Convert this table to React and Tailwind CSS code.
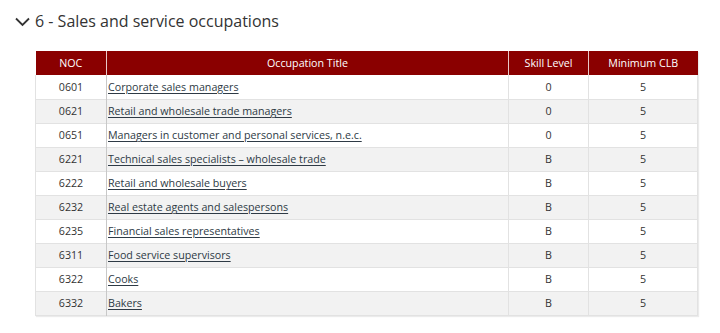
import React from "react";

const rows = [
  ["0601", "Corporate sales managers", "0", "5"],
  ["0621", "Retail and wholesale trade managers", "0", "5"],
  ["0651", "Managers in customer and personal services, n.e.c.", "0", "5"],
  ["6221", "Technical sales specialists – wholesale trade", "B", "5"],
  ["6222", "Retail and wholesale buyers", "B", "5"],
  ["6232", "Real estate agents and salespersons", "B", "5"],
  ["6235", "Financial sales representatives", "B", "5"],
  ["6311", "Food service supervisors", "B", "5"],
  ["6322", "Cooks", "B", "5"],
  ["6332", "Bakers", "B", "5"],
];

export default function App() {
  return (
    <div className="w-[720px] h-[333px] bg-white overflow-hidden" style={{ fontFamily: '"Open Sans", "Noto Sans", sans-serif' }}>
      <div className="flex items-center h-[40px] pl-[15px] pt-[1px]">
        <svg width="15" height="10" viewBox="0 0 15 10" className="mr-[5px] mt-[2px]">
          <path d="M1 1.5 L7.5 8 L14 1.5" fill="none" stroke="#333" strokeWidth="1.8" />
        </svg>
        <span className="text-[16px] text-[#333]">6 - Sales and service occupations</span>
      </div>
      <div className="pl-[35px] pt-[11px]">
        <table className="w-[662px] border-collapse table-fixed text-[10.7px] text-[#333] shadow-[1px_1px_1px_rgba(0,0,0,0.08)]">
          <colgroup>
            <col className="w-[71px]" />
            <col className="w-[402px]" />
            <col className="w-[80px]" />
            <col className="w-[109px]" />
          </colgroup>
          <thead>
            <tr className="h-[24px] bg-[#8a0000] text-white">
              <th className="font-normal text-center border-r border-[#e8c8c8]">NOC</th>
              <th className="font-normal text-center border-r border-[#e8c8c8]">Occupation Title</th>
              <th className="font-normal text-center border-r border-[#e8c8c8]">Skill Level</th>
              <th className="font-normal text-center">Minimum CLB</th>
            </tr>
          </thead>
          <tbody>
            {rows.map((r, i) => (
              <tr key={r[0]} className={`h-[24px] ${i % 2 === 1 ? "bg-[#f2f2f2]" : "bg-white"} border-b border-[#e2e2e2]`}>
                <td className="text-center border-l border-[#e2e2e2] border-r border-r-[#c8c8c8]">{r[0]}</td>
                <td className="pl-[1px] border-r border-[#e2e2e2]">
                  <a href="#" className="underline text-[#2e3a45] underline-offset-[2px]">{r[1]}</a>
                </td>
                <td className="text-center border-r border-[#e2e2e2]">{r[2]}</td>
                <td className="text-center border-r border-[#e2e2e2]">{r[3]}</td>
              </tr>
            ))}
          </tbody>
        </table>
      </div>
    </div>
  );
}
